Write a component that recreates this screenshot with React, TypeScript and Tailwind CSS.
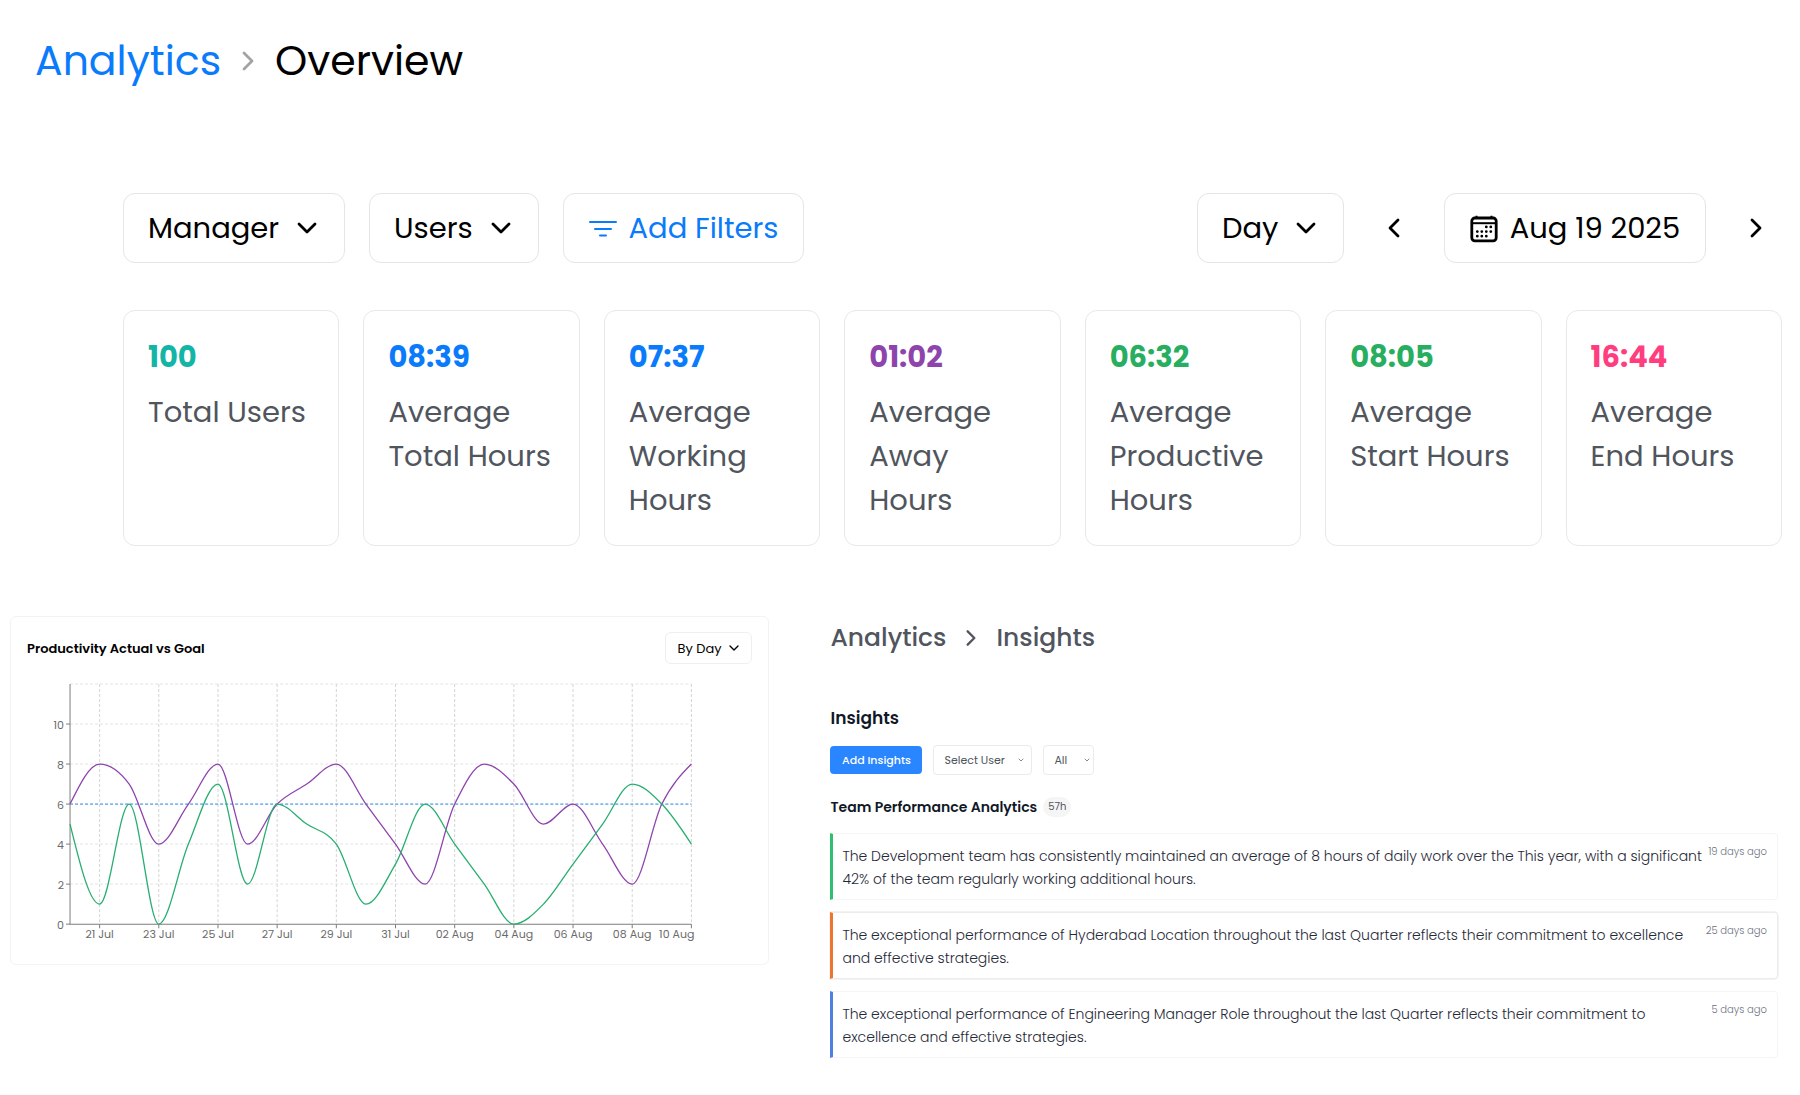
import { ReactNode } from 'react';

const stats = [
  { value: '100', label: 'Total Users', color: 'text-[#12b5a6]' },
  { value: '08:39', label: 'Average Total Hours', color: 'text-[#0a7bfb]' },
  { value: '07:37', label: 'Average Working Hours', color: 'text-[#0a7bfb]' },
  { value: '01:02', label: 'Average Away Hours', color: 'text-[#8e44ad]' },
  { value: '06:32', label: 'Average Productive Hours', color: 'text-[#27ae60]' },
  { value: '08:05', label: 'Average Start Hours', color: 'text-[#27ae60]' },
  { value: '16:44', label: 'Average End Hours', color: 'text-[#ff3d7f]' },
];

const insights = [
  {
    text: 'The Development team has consistently maintained an average of 8 hours of daily work over the This year, with a significant 42% of the team regularly working additional hours.',
    time: '19 days ago',
    style: 'border-[#f5f5f5] border-l-[#2fbf71]',
  },
  {
    text: 'The exceptional performance of Hyderabad Location throughout the last Quarter reflects their commitment to excellence and effective strategies.',
    time: '25 days ago',
    style: 'border-[#ececec] ring-1 ring-[#f3f3f3] border-l-[#ee7530]',
  },
  {
    text: 'The exceptional performance of Engineering Manager Role throughout the last Quarter reflects their commitment to excellence and effective strategies.',
    time: '5 days ago',
    style: 'border-[#f5f5f5] border-l-[#4f80e1]',
  },
];

const actual = [5, 1, 6, 0, 4, 7, 2, 6, 5, 4, 1, 3, 6, 4, 2, 0, 1, 3, 5, 7, 6, 4];
const goal = [6, 8, 7, 4, 6, 8, 4, 6, 7, 8, 6, 4, 2, 6, 8, 7, 5, 6, 4, 2, 6, 8];
const xLabels = [
  '21 Jul',
  '23 Jul',
  '25 Jul',
  '27 Jul',
  '29 Jul',
  '31 Jul',
  '02 Aug',
  '04 Aug',
  '06 Aug',
  '08 Aug',
  '10 Aug',
];

const LEFT = 43;
const TOP = 6;
const PLOT_W = 621;
const PLOT_H = 240;
const px = (i: number) => LEFT + (i * PLOT_W) / 21;
const py = (v: number) => TOP + PLOT_H - (v * PLOT_H) / 12;

// monotone cubic through the points, so the curve never overshoots a value
const curve = (values: number[]) => {
  const step = PLOT_W / 21;
  const ys = values.map(py);
  const slopes = ys.slice(1).map((y, i) => (y - ys[i]) / step);
  const inner = ys.map((_, i) => {
    if (i === 0 || i === ys.length - 1) return 0;
    const a = slopes[i - 1];
    const b = slopes[i];
    if (a * b <= 0) return 0;
    return Math.sign(a) * 2 * Math.min(Math.abs(a), Math.abs(b), Math.abs(a + b) / 4);
  });
  inner[0] = (3 * slopes[0] - inner[1]) / 2;
  const n = ys.length - 1;
  inner[n] = (3 * slopes[n - 1] - inner[n - 1]) / 2;
  return ys
    .map((y, i) => {
      if (i === 0) return `M${px(0)},${y}`;
      const x0 = px(i - 1);
      const x1 = px(i);
      return `C${x0 + step / 3},${ys[i - 1] + (inner[i - 1] * step) / 3} ${x1 - step / 3},${y - (inner[i] * step) / 3} ${x1},${y}`;
    })
    .join('');
};

const Chevron = ({ d, className }: { d: string; className: string }) => (
  <svg
    viewBox="0 0 24 24"
    className={className}
    fill="none"
    stroke="currentColor"
    strokeWidth="2.8"
    strokeLinecap="round"
    strokeLinejoin="round"
    aria-hidden="true"
  >
    <path d={d} />
  </svg>
);

const DOWN = 'M4 8l8 8 8-8';
const RIGHT = 'M8 4l8 8-8 8';
const LEFT_ARROW = 'M16 4l-8 8 8 8';

const Dropdown = ({
  label,
  className,
  icon,
}: {
  label: string;
  className: string;
  icon: string;
}) => (
  <div className="relative flex">
    <select
      aria-label={label}
      className={`appearance-none border bg-white pt-px ${className}`}
    >
      <option>{label}</option>
    </select>
    <Chevron
      d={DOWN}
      className={`absolute top-1/2 -translate-y-1/2 pointer-events-none ${icon}`}
    />
  </div>
);

const CalendarIcon = () => (
  <svg viewBox="0 0 28 28" className="w-7 h-7" fill="none" stroke="currentColor">
    <rect x="1.8" y="3" width="24.4" height="22.8" rx="3" strokeWidth="2.8" />
    <path d="M2 8.2h24" strokeWidth="2" />
    <path d="M6.5 .8v2M21.5 .8v2" strokeWidth="2" />
    <path
      d="M16.3 11.9h.01M20.8 11.9h.01M7.3 16.6h.01M11.8 16.6h.01M16.3 16.6h.01M20.8 16.6h.01M7.3 21.2h.01M11.8 21.2h.01M16.3 21.2h.01"
      strokeWidth="2.8"
      strokeLinecap="round"
    />
  </svg>
);

const Panel = ({ children }: { children: ReactNode }) => (
  <section className="rounded-md border border-[#f3f3f3] h-[349px] px-4 pt-[15px]">
    {children}
  </section>
);

const ProductivityChart = () => (
  <svg viewBox="0 0 725 276" className="w-full" role="img" aria-label="Productivity Actual vs Goal">
    {[2, 4, 6, 8, 10, 12].map((v) => (
      <path key={v} d={`M${LEFT} ${py(v)}h${PLOT_W}`} stroke="#e4e4e4" strokeDasharray="3 2" />
    ))}
    {xLabels.map((label, i) => (
      <path
        key={label}
        d={`M${px(i * 2 + 1)} ${TOP}v${PLOT_H}`}
        stroke="#d4d4d4"
        strokeDasharray="3 2"
      />
    ))}
    <path d={`M${LEFT} ${py(6)}h${PLOT_W}`} stroke="#5aa2f0" strokeWidth="1.2" strokeDasharray="3 2" />
    <path d={`M${LEFT} ${TOP}V${TOP + PLOT_H}H${LEFT + PLOT_W}`} fill="none" stroke="#7d7d7d" />
    <path d={curve(goal)} fill="none" stroke="#8e44ad" strokeWidth="1.3" />
    <path d={curve(actual)} fill="none" stroke="#27ae70" strokeWidth="1.3" />
    {[0, 2, 4, 6, 8, 10].map((v) => (
      <g key={v}>
        <path d={`M${LEFT - 4} ${py(v)}h4`} stroke="#7d7d7d" />
        <text x={LEFT - 6} y={py(v) + 5} textAnchor="end" fontSize="11" fill="#6b6b6b">
          {v}
        </text>
      </g>
    ))}
    {xLabels.map((label, i) => (
      <g key={label}>
        <path d={`M${px(i * 2 + 1)} ${TOP + PLOT_H}v4`} stroke="#7d7d7d" />
        <text
          x={i === 10 ? px(21) + 3 : px(i * 2 + 1)}
          y={TOP + PLOT_H + 14}
          textAnchor={i === 10 ? 'end' : 'middle'}
          fontSize="11"
          fill="#6b6b6b"
        >
          {label}
        </text>
      </g>
    ))}
  </svg>
);

const App = () => {
  return (
    <main className="bg-white font-['Poppins','Inter','Liberation_Sans',sans-serif] text-black">
      <nav className="flex items-center pl-[35px] pt-[31px] text-[41px] leading-[60px]">
        <a href="#analytics" className="text-[#0a7bfb]">
          Analytics
        </a>
        <Chevron d={RIGHT} className="w-6 h-6 mx-[15px] text-[#a3a3a3]" />
        <span>Overview</span>
      </nav>

      <div className="pl-[123px] pr-[18px] pt-[102px]">
        <div className="flex items-center text-[29px]">
          <Dropdown
            label="Manager"
            className="w-[222px] h-[70px] pl-6 rounded-xl border-[#e5e5e5]"
            icon="right-[26px] w-6 h-6"
          />
          <div className="ml-6">
            <Dropdown
              label="Users"
              className="w-[170px] h-[70px] pl-6 rounded-xl border-[#e5e5e5]"
              icon="right-[26px] w-6 h-6"
            />
          </div>
          <button className="ml-6 w-[241px] h-[70px] pt-px flex items-center justify-center gap-3 rounded-xl border border-[#e5e5e5] text-[#0a7bfb]">
            <svg viewBox="0 0 28 18" className="w-7 h-[18px]" fill="none" stroke="currentColor" strokeWidth="2" strokeLinecap="round">
              <path d="M1 2h26M6 9h16M11 15.5h6" />
            </svg>
            Add Filters
          </button>
          <div className="ml-auto">
            <Dropdown
              label="Day"
              className="w-[147px] h-[70px] pl-6 rounded-xl border-[#e5e5e5]"
              icon="right-[26px] w-6 h-6"
            />
          </div>
          <button aria-label="Previous day" className="ml-[38px]">
            <Chevron d={LEFT_ARROW} className="w-6 h-6" />
          </button>
          <button className="ml-[38px] w-[262px] h-[70px] pt-px flex items-center justify-center gap-3 rounded-xl border border-[#e5e5e5]">
            <CalendarIcon />
            Aug 19 2025
          </button>
          <button aria-label="Next day" className="ml-[38px] mr-[14px]">
            <Chevron d={RIGHT} className="w-6 h-6" />
          </button>
        </div>

        <div className="grid grid-cols-7 gap-6 mt-[47px]">
          {stats.map((stat) => (
            <div
              key={stat.label}
              className="h-[236px] rounded-xl border border-[#e8e8e8] px-6 pt-6"
            >
              <div className={`text-[29px] leading-[44px] font-bold ${stat.color}`}>
                {stat.value}
              </div>
              <div className="mt-[11px] text-[29px] leading-[44px] text-[#50555e]">
                {stat.label}
              </div>
            </div>
          ))}
        </div>
      </div>

      <div className="grid grid-cols-[759fr_947fr] gap-[61px] items-start pl-[10px] pr-[22px] mt-[70px]">
        <Panel>
          <div className="flex items-center justify-between">
            <h2 className="pt-px text-[13px] font-semibold">Productivity Actual vs Goal</h2>
            <Dropdown
              label="By Day"
              className="w-[87px] h-8 pl-[11px] rounded-md text-[13px] border-[#efefef]"
              icon="right-3 w-3 h-3"
            />
          </div>
          <div className="mt-[14px]">
            <ProductivityChart />
          </div>
        </Panel>

        <section>
          <nav className="flex items-center text-[25px] leading-[44px] font-medium text-[#50555e]">
            <a href="#analytics">Analytics</a>
            <Chevron d={RIGHT} className="w-5 h-5 mx-[15px]" />
            <span>Insights</span>
          </nav>
          <h2 className="mt-[46px] text-[17px] leading-6 font-semibold text-[#111827]">Insights</h2>
          <div className="flex items-center gap-[11px] mt-[15px] text-[11px] text-[#50555e]">
            <button className="w-[92px] h-7 pt-px rounded bg-[#2a86ff] text-white font-medium">
              Add Insights
            </button>
            <Dropdown
              label="Select User"
              className="w-[99px] h-[30px] pl-[10px] rounded border-[#ebebeb]"
              icon="right-2 w-[6px] h-[6px]"
            />
            <Dropdown
              label="All"
              className="w-[51px] h-[30px] pl-[10px] rounded border-[#ebebeb]"
              icon="right-1 w-[6px] h-[6px]"
            />
          </div>
          <div className="flex items-center gap-[6px] mt-5 leading-6">
            <h3 className="text-[14px] font-semibold text-[#111827]">Team Performance Analytics</h3>
            <span className="px-[5px] rounded-full bg-[#f5f5f6] text-[10px] leading-5 text-[#50555e]">
              57h
            </span>
          </div>
          <ul className="mt-[14px] grid gap-3">
            {insights.map((item) => (
              <li
                key={item.time}
                className={`flex justify-between h-[67px] pl-[9px] pr-[10px] pt-[11px] rounded-r border border-l-3 ${item.style}`}
              >
                <p className="max-w-[862px] text-[14px] leading-[23px] font-light text-[#1f2937]">{item.text}</p>
                <time className="shrink-0 text-[10px] leading-[14px] font-light text-[#6b7280]">{item.time}</time>
              </li>
            ))}
          </ul>
        </section>
      </div>
    </main>
  );
};

export default App;
